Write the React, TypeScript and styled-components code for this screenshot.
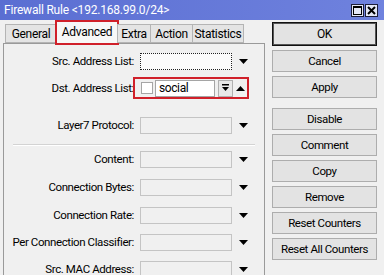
import React from 'react';
import styled, { createGlobalStyle } from 'styled-components';

const GlobalStyle = createGlobalStyle`
    html, body {
        margin: 0;
        padding: 0;
        background: #f0f0f0;
    }
`;

interface Field {
    label: string;
    top: number;
}

const fieldsTop: Field[] = [{ label: 'Src. Address List:', top: 5 }];

const fieldsBottom: Field[] = [
    { label: 'Content:', top: 1 },
    { label: 'Connection Bytes:', top: 4 },
    { label: 'Connection Rate:', top: 4 },
    { label: 'Per Connection Classifier:', top: 3 },
    { label: 'Src. MAC Address:', top: 3 },
];

const tabs = [
    { name: 'General', width: 52 },
    { name: 'Advanced', width: 62 },
    { name: 'Extra', width: 34 },
    { name: 'Action', width: 43 },
    { name: 'Statistics', width: 52 },
];

const buttons = ['Cancel', 'Apply', 'Disable', 'Comment', 'Copy', 'Remove', 'Reset Counters', 'Reset All Counters'];

const DownArrow = () => (
    <svg width="9" height="5" viewBox="0 0 9 5">
        <polygon points="0,0 9,0 4.5,5" fill="#000" />
    </svg>
);

const UpArrow = () => (
    <svg width="9" height="5" viewBox="0 0 9 5">
        <polygon points="0,5 9,5 4.5,0" fill="#000" />
    </svg>
);

const App = () => {
    return (
        <Window>
            <GlobalStyle />
            <TitleBar>
                <Title>Firewall Rule &lt;192.168.99.0/24&gt;</Title>
                <TitleButtons>
                    <TitleButton>
                        <svg width="9" height="9" viewBox="0 0 9 9">
                            <rect x="0.5" y="0.5" width="8" height="8" fill="none" stroke="#000" />
                            <rect x="0" y="0" width="9" height="2" fill="#000" />
                        </svg>
                    </TitleButton>
                    <TitleButton>
                        <svg width="9" height="9" viewBox="0 0 9 9">
                            <path d="M1 1 L8 8 M8 1 L1 8" stroke="#000" strokeWidth="2" />
                        </svg>
                    </TitleButton>
                </TitleButtons>
            </TitleBar>
            <Main>
                <LeftColumn>
                    <TabStrip>
                        {tabs.map((t) => (
                            <Tab key={t.name} $width={t.width} $active={t.name === 'Advanced'}>
                                {t.name}
                            </Tab>
                        ))}
                    </TabStrip>
                    <Panel>
                        {fieldsTop.map((f) => (
                            <Row key={f.label} $top={f.top}>
                                <Label>{f.label}</Label>
                                <Input $focused />
                                <ArrowCell>
                                    <DownArrow />
                                </ArrowCell>
                            </Row>
                        ))}
                        <Row $top={3}>
                            <Label>Dst. Address List:</Label>
                            <HighlightBox>
                                <CheckBox />
                                <ValueInput>social</ValueInput>
                                <SmallButton>
                                    <svg width="7" height="8" viewBox="0 0 7 8">
                                        <rect x="0" y="0" width="7" height="1.5" fill="#000" />
                                        <polygon points="0,3 7,3 3.5,7" fill="#000" />
                                    </svg>
                                </SmallButton>
                                <UpCell>
                                    <UpArrow />
                                </UpCell>
                            </HighlightBox>
                        </Row>
                        <Row $top={13}>
                            <Label>Layer7 Protocol:</Label>
                            <Input />
                            <ArrowCell>
                                <DownArrow />
                            </ArrowCell>
                        </Row>
                        <Separator />
                        {fieldsBottom.map((f) => (
                            <Row key={f.label} $top={f.top}>
                                <Label>{f.label}</Label>
                                <Input />
                                <ArrowCell>
                                    <DownArrow />
                                </ArrowCell>
                            </Row>
                        ))}
                    </Panel>
                </LeftColumn>
                <ButtonColumn>
                    <DialogButton $default>OK</DialogButton>
                    {buttons.map((b) => (
                        <DialogButton key={b} $gap={b === 'Disable'}>
                            {b}
                        </DialogButton>
                    ))}
                </ButtonColumn>
            </Main>
        </Window>
    );
};

export default App;

const Window = styled.div`
    width: 384px;
    height: 275px;
    overflow: hidden;
    background: #f0f0f0;
    display: flex;
    flex-direction: column;
    font-family: Roboto, 'Liberation Sans', sans-serif;
    font-size: 11.5px;
    letter-spacing: -0.4px;
    color: #000;
`;

const TitleBar = styled.div`
    height: 20px;
    flex: none;
    display: flex;
    align-items: center;
    justify-content: space-between;
    padding: 0 6px 0 4px;
    background: linear-gradient(to right, #5a6ed2, #6f82de);
`;

const Title = styled.div`
    color: #fff;
    font-size: 12px;
    letter-spacing: -0.2px;
`;

const TitleButtons = styled.div`
    display: flex;
    gap: 1px;
`;

const TitleButton = styled.div`
    width: 13px;
    height: 13px;
    box-sizing: border-box;
    border: 1px solid #1b1d3a;
    background: #e4e7f6;
    display: flex;
    align-items: center;
    justify-content: center;
`;

const Main = styled.div`
    flex: 1;
    display: flex;
    padding: 2px 0 0 3px;
    gap: 7px;
`;

const LeftColumn = styled.div`
    width: 262px;
    display: flex;
    flex-direction: column;
`;

const TabStrip = styled.div`
    height: 21px;
    display: flex;
    align-items: flex-end;
    padding-left: 3px;
    position: relative;
    z-index: 1;
`;

const Tab = styled.div<{ $width: number; $active?: boolean }>`
    width: ${(p) => p.$width}px;
    height: ${(p) => (p.$active ? 23 : 19)}px;
    margin-bottom: ${(p) => (p.$active ? -1 : 0)}px;
    box-sizing: border-box;
    display: flex;
    align-items: center;
    justify-content: center;
    font-size: 12px;
    letter-spacing: -0.3px;
    border: 1px solid #b4b4b4;
    border-bottom: ${(p) => (p.$active ? 'none' : '1px solid #b4b4b4')};
    margin-left: -1px;
    background: ${(p) => (p.$active ? '#f7f7f7' : '#e4e4e4')};
    outline: ${(p) => (p.$active ? '2px solid #d0202a' : 'none')};
    outline-offset: -1px;
    padding-bottom: ${(p) => (p.$active ? 3 : 0)}px;
`;

const Panel = styled.div`
    flex: 1;
    border: 1px solid #9a9a9a;
    border-bottom: none;
    background: #f0f0f0;
    display: flex;
    flex-direction: column;
`;

const Row = styled.div<{ $top: number }>`
    height: 24px;
    flex: none;
    margin-top: ${(p) => p.$top}px;
    display: grid;
    grid-template-columns: 132px 92px 15px;
    column-gap: 4px;
    align-items: center;
`;

const Label = styled.div`
    text-align: right;
    padding-right: 2px;
    white-space: nowrap;
`;

const Input = styled.div<{ $focused?: boolean }>`
    height: 17px;
    box-sizing: border-box;
    background: ${(p) => (p.$focused ? '#fbfbfb' : '#f0f0f0')};
    border: 1px ${(p) => (p.$focused ? 'dotted #222' : 'solid #c4c4c4')};
`;

const ArrowCell = styled.div`
    display: flex;
    justify-content: center;
    align-items: center;
`;

const HighlightBox = styled.div`
    grid-column: 2 / span 2;
    height: 22px;
    box-sizing: border-box;
    margin: 0 2px 0 -7px;
    padding-left: 6px;
    border: 2px solid #d0202a;
    display: flex;
    align-items: center;
`;

const CheckBox = styled.div`
    width: 12px;
    height: 12px;
    box-sizing: border-box;
    background: #fff;
    border: 1px solid #a5a5a5;
    margin-right: 2px;
`;

const ValueInput = styled.div`
    width: 60px;
    height: 17px;
    box-sizing: border-box;
    background: #fff;
    border: 1px solid #a5a5a5;
    padding-left: 3px;
    line-height: 15px;
    font-size: 12px;
`;

const SmallButton = styled.div`
    width: 15px;
    height: 17px;
    margin-left: 3px;
    box-sizing: border-box;
    background: #e8e8e8;
    border: 1px solid #b0b0b0;
    display: flex;
    align-items: center;
    justify-content: center;
`;

const UpCell = styled.div`
    flex: 1;
    display: flex;
    justify-content: center;
    align-items: center;
`;

const Separator = styled.div`
    margin: 7px 9px 0 9px;
    height: 0;
    border-top: 1px solid #d3d3d3;
    border-bottom: 1px solid #fff;
`;

const ButtonColumn = styled.div`
    width: 105px;
    display: flex;
    flex-direction: column;
    gap: 4px;
`;

const DialogButton = styled.div<{ $default?: boolean; $gap?: boolean }>`
    height: ${(p) => (p.$default ? 24 : 22)}px;
    box-sizing: border-box;
    display: flex;
    align-items: center;
    justify-content: center;
    font-size: ${(p) => (p.$default ? 12 : 11.5)}px;
    background: #e3e3e3;
    border: 1px solid ${(p) => (p.$default ? '#111' : '#adadad')};
    box-shadow: ${(p) => (p.$default ? 'inset 0 0 0 1px #555' : 'none')};
    margin-top: ${(p) => (p.$gap ? 6 : 0)}px;
    white-space: nowrap;
`;
